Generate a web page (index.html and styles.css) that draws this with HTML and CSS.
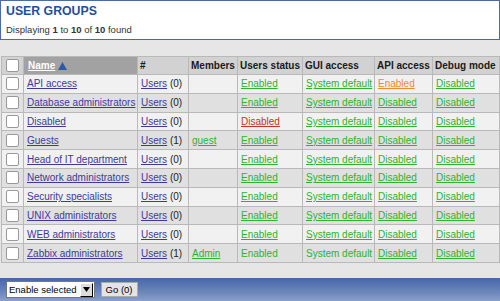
FILE: index.html
```html
<!DOCTYPE html>
<html lang="en">

<head>
	<meta charset="UTF-8" />
	<title>User groups</title>
	<link rel="stylesheet" href="styles.css">
</head>

<body>
	<div class="header">
		<h1>USER GROUPS</h1>
		<div class="info">Displaying <b>1</b> to <b>10</b> of <b>10</b> found</div>
	</div>

	<table class="list">
		<colgroup>
			<col style="width: 22px">
			<col style="width: 114px">
			<col style="width: 51px">
			<col style="width: 49px">
			<col style="width: 65px">
			<col style="width: 72px">
			<col style="width: 58px">
			<col style="width: 67px">
		</colgroup>
		<thead>
			<tr>
				<th class="check"><span class="box"></span></th>
				<th class="sorted"><a href="#">Name</a> <svg class="arrow" width="9" height="8" viewBox="0 0 9 8"><polygon points="4.5,0 9,8 0,8" fill="#2b5ba8" /></svg></th>
				<th>#</th>
				<th>Members</th>
				<th>Users status</th>
				<th>GUI access</th>
				<th>API access</th>
				<th>Debug mode</th>
			</tr>
		</thead>
		<tbody>
			<tr>
				<td class="check"><span class="box"></span></td>
				<td><a href="#">API access</a></td>
				<td><a href="#">Users</a> (0)</td>
				<td></td>
				<td><a class="green" href="#">Enabled</a></td>
				<td><a class="green" href="#">System default</a></td>
				<td><a class="orange" href="#">Enabled</a></td>
				<td><a class="green" href="#">Disabled</a></td>
			</tr>
			<tr>
				<td class="check"><span class="box"></span></td>
				<td><a href="#">Database administrators</a></td>
				<td><a href="#">Users</a> (0)</td>
				<td></td>
				<td><a class="green" href="#">Enabled</a></td>
				<td><a class="green" href="#">System default</a></td>
				<td><a class="green" href="#">Disabled</a></td>
				<td><a class="green" href="#">Disabled</a></td>
			</tr>
			<tr>
				<td class="check"><span class="box"></span></td>
				<td><a href="#">Disabled</a></td>
				<td><a href="#">Users</a> (0)</td>
				<td></td>
				<td><a class="red" href="#">Disabled</a></td>
				<td><a class="green" href="#">System default</a></td>
				<td><a class="green" href="#">Disabled</a></td>
				<td><a class="green" href="#">Disabled</a></td>
			</tr>
			<tr>
				<td class="check"><span class="box"></span></td>
				<td><a href="#">Guests</a></td>
				<td><a href="#">Users</a> (1)</td>
				<td><a class="green" href="#">guest</a></td>
				<td><a class="green" href="#">Enabled</a></td>
				<td><a class="green" href="#">System default</a></td>
				<td><a class="green" href="#">Disabled</a></td>
				<td><a class="green" href="#">Disabled</a></td>
			</tr>
			<tr>
				<td class="check"><span class="box"></span></td>
				<td><a href="#">Head of IT department</a></td>
				<td><a href="#">Users</a> (0)</td>
				<td></td>
				<td><a class="green" href="#">Enabled</a></td>
				<td><a class="green" href="#">System default</a></td>
				<td><a class="green" href="#">Disabled</a></td>
				<td><a class="green" href="#">Disabled</a></td>
			</tr>
			<tr>
				<td class="check"><span class="box"></span></td>
				<td><a href="#">Network administrators</a></td>
				<td><a href="#">Users</a> (0)</td>
				<td></td>
				<td><a class="green" href="#">Enabled</a></td>
				<td><a class="green" href="#">System default</a></td>
				<td><a class="green" href="#">Disabled</a></td>
				<td><a class="green" href="#">Disabled</a></td>
			</tr>
			<tr>
				<td class="check"><span class="box"></span></td>
				<td><a href="#">Security specialists</a></td>
				<td><a href="#">Users</a> (0)</td>
				<td></td>
				<td><a class="green" href="#">Enabled</a></td>
				<td><a class="green" href="#">System default</a></td>
				<td><a class="green" href="#">Disabled</a></td>
				<td><a class="green" href="#">Disabled</a></td>
			</tr>
			<tr>
				<td class="check"><span class="box"></span></td>
				<td><a href="#">UNIX administrators</a></td>
				<td><a href="#">Users</a> (0)</td>
				<td></td>
				<td><a class="green" href="#">Enabled</a></td>
				<td><a class="green" href="#">System default</a></td>
				<td><a class="green" href="#">Disabled</a></td>
				<td><a class="green" href="#">Disabled</a></td>
			</tr>
			<tr>
				<td class="check"><span class="box"></span></td>
				<td><a href="#">WEB administrators</a></td>
				<td><a href="#">Users</a> (0)</td>
				<td></td>
				<td><a class="green" href="#">Enabled</a></td>
				<td><a class="green" href="#">System default</a></td>
				<td><a class="green" href="#">Disabled</a></td>
				<td><a class="green" href="#">Disabled</a></td>
			</tr>
			<tr>
				<td class="check"><span class="box"></span></td>
				<td><a href="#">Zabbix administrators</a></td>
				<td><a href="#">Users</a> (1)</td>
				<td><a class="green" href="#">Admin</a></td>
				<td><span class="green">Enabled</span></td>
				<td><span class="green">System default</span></td>
				<td><a class="green" href="#">Disabled</a></td>
				<td><a class="green" href="#">Disabled</a></td>
			</tr>
		</tbody>
	</table>

	<div class="footer">
		<span class="select">Enable selected<span class="drop"><svg width="7" height="5" viewBox="0 0 7 5"><polygon points="0,0 7,0 3.5,5" fill="#000" /></svg></span></span>
		<button class="go">Go (0)</button>
	</div>
</body>

</html>
```

FILE: styles.css
```css
body {
	margin: 0;
	background-color: #e6e6e6;
	color: #222;
	font-family: "Liberation Sans", Arial, sans-serif;
	font-size: 10px;
}

a {
	color: #3e3a9c;
}

.header {
	box-sizing: border-box;
	height: 40px;
	padding: 3px 5px 0;
	background-color: #fff;
	border: 1px solid #4b6aa6;
}

.header h1 {
	margin: 0;
	color: #1f4e9e;
	font-size: 12.3px;
	line-height: 15px;
}

.info {
	margin-top: 5px;
	color: #333;
	font-size: 9.5px;
	line-height: 12px;
}

.list {
	width: 498px;
	margin: 16px 1px 0;
	table-layout: fixed;
	border-collapse: collapse;
}

.list th,
.list td {
	box-sizing: border-box;
	height: 18.8px;
	padding: 0 3px;
	border: 1px solid #b9b9b9;
	text-align: left;
	white-space: nowrap;
	overflow: hidden;
	line-height: 17px;
}

.list th {
	height: 18px;
	padding: 0 2px;
	background-color: #d2d2d2;
	color: #1a1a1a;
}

.list th.sorted {
	padding-left: 4px;
	background-color: #a2a2a2;
}

.list th.sorted a {
	color: #fff;
}

.arrow {
	vertical-align: -1px;
}

.list tbody tr:nth-child(odd) td {
	background-color: #f1f1f1;
}

.list tbody tr:nth-child(even) td {
	background-color: #e0e0e0;
}

.list .check {
	padding: 0;
	text-align: center;
}

.box {
	display: inline-block;
	width: 11px;
	height: 11px;
	margin-top: 2px;
	vertical-align: top;
	background-color: #fff;
	border: 1px solid #999;
	border-radius: 2px;
}

.green {
	color: #2db32d;
}

.red {
	color: #c9302c;
}

.orange {
	color: #f28a26;
}

.footer {
	display: flex;
	align-items: center;
	gap: 6px;
	height: 24px;
	margin-top: 15px;
	padding: 0 6px;
	background: linear-gradient(#4567a8, #6c87bb 60%, #8ea3cc);
}

.select {
	display: flex;
	align-items: center;
	height: 15px;
	padding-left: 2px;
	background-color: #fff;
	border: 1px solid #777;
	color: #000;
	font-size: 9.5px;
}

.drop {
	display: flex;
	align-items: center;
	justify-content: center;
	width: 11px;
	height: 12px;
	margin-left: 3px;
	margin-right: 1px;
	background-color: #ddd;
	border-top: 1px solid #fff;
	border-left: 1px solid #fff;
	border-right: 1px solid #000;
	border-bottom: 1px solid #000;
}

.go {
	height: 15px;
	padding: 0 4px;
	background-color: #e4e4e4;
	border: 1px solid #aaa;
	color: #000;
	font-family: "Liberation Sans", Arial, sans-serif;
	font-size: 9.5px;
	line-height: 13px;
}
```
